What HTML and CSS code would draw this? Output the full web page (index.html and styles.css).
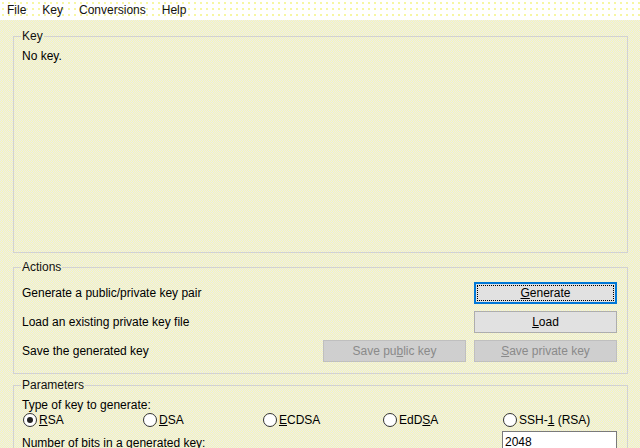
FILE: index.html
```html
<!DOCTYPE html>
<html lang="en">
<head>
  <meta charset="UTF-8" />
  <title>PuTTY Key Generator</title>
  <link rel="stylesheet" href="styles.css">
</head>
<body>

  <div class="menubar">
    <span class="menu">File</span>
    <span class="menu">Key</span>
    <span class="menu">Conversions</span>
    <span class="menu">Help</span>
  </div>

  <div class="main">
    <fieldset class="group key-group">
      <legend>Key</legend>
      <div class="nokey">No key.</div>
    </fieldset>

    <fieldset class="group actions">
      <legend>Actions</legend>
      <div class="row">
        <span class="label">Generate a public/private key pair</span>
        <button class="btn focus"><u>G</u>enerate</button>
      </div>
      <div class="row">
        <span class="label">Load an existing private key file</span>
        <button class="btn"><u>L</u>oad</button>
      </div>
      <div class="row">
        <span class="label">Save the generated key</span>
        <button class="btn" disabled>Save pu<u>b</u>lic key</button>
        <button class="btn" disabled><u>S</u>ave private key</button>
      </div>
    </fieldset>

    <fieldset class="group params">
      <legend>Parameters</legend>
      <div class="label">Type of key to generate:</div>
      <div class="radios">
        <label class="radio"><span class="dot checked"></span><span><u>R</u>SA</span></label>
        <label class="radio"><span class="dot"></span><span><u>D</u>SA</span></label>
        <label class="radio"><span class="dot"></span><span><u>E</u>CDSA</span></label>
        <label class="radio"><span class="dot"></span><span>EdD<u>S</u>A</span></label>
        <label class="radio"><span class="dot"></span><span>SSH-<u>1</u> (RSA)</span></label>
      </div>
      <div class="bits">
        <span class="label">Number of bits in a generated key:</span>
        <span class="field">2048</span>
      </div>
    </fieldset>
  </div>

</body>
</html>
```

FILE: styles.css
```css
html, body {
  margin: 0;
  height: 100%;
  overflow: hidden;
}
body {
  font-family: "Liberation Sans", Arial, sans-serif;
  font-size: 12px;
  color: #000;
  background: repeating-conic-gradient(#f8f8b4 0 25%, #eaeaf0 0 50%) 0 0 / 2px 2px;
}
.menubar {
  height: 20px;
  display: flex;
  align-items: center;
  gap: 16px;
  padding-left: 7px;
  background-color: #fff;
  background-image: radial-gradient(#f2f270 0.6px, transparent 0.9px);
  background-size: 6px 6px;
}
.menu {
  line-height: 20px;
  color: #111;
}
.main {
  padding: 0 12px 0 13px;
}
.group {
  margin: 0;
  border: 1px solid #d2d2d2;
  padding: 0 10px 0 8px;
  min-width: 0;
}
.group legend {
  padding: 0 1px;
  margin-left: -1px;
  line-height: 14px;
  color: #111;
}
.key-group {
  margin-top: 9px;
  height: 224px;
  box-sizing: border-box;
}
.nokey {
  margin-top: 6px;
  line-height: 14px;
}
.actions {
  margin-top: 7px;
  height: 114px;
  box-sizing: border-box;
  padding-top: 8px;
}
.row {
  display: flex;
  align-items: center;
  gap: 8px;
  height: 22px;
  margin-bottom: 7px;
}
.row .label {
  flex: 1;
}
.btn {
  width: 143px;
  height: 22px;
  font-family: inherit;
  font-size: 12px;
  color: #000;
  background: #e1e1e1;
  border: 1px solid #adadad;
  padding: 0;
}
.btn.focus {
  border: 1px solid #0078d7;
  box-shadow: inset 0 0 0 1px #0078d7;
  outline: 1px dotted #000;
  outline-offset: -4px;
}
.btn:disabled {
  background: #cfcfcf;
  border-color: #bfbfbf;
  color: #8a8a8a;
}
.params {
  margin-top: 4px;
  height: 100px;
  padding-top: 6px;
}
.params .label {
  line-height: 14px;
}
.radios {
  display: grid;
  grid-template-columns: repeat(5, 120px);
  height: 16px;
  align-items: center;
}
.radio {
  display: flex;
  align-items: center;
  gap: 2px;
  padding-left: 1px;
  line-height: 14px;
}
.dot {
  width: 12px;
  height: 12px;
  border: 1px solid #333;
  border-radius: 50%;
  background: #fff;
  position: relative;
}
.dot.checked::after {
  content: "";
  position: absolute;
  left: 3px;
  top: 3px;
  width: 6px;
  height: 6px;
  border-radius: 50%;
  background: #222;
}
.bits {
  display: grid;
  grid-template-columns: 480px 115px;
  margin-top: 3px;
  align-items: start;
}
.bits .label {
  padding-top: 5px;
}
.field {
  height: 20px;
  border: 1px solid #7a7a7a;
  background: #fff;
  padding-left: 2px;
  line-height: 20px;
  box-sizing: border-box;
}
```
